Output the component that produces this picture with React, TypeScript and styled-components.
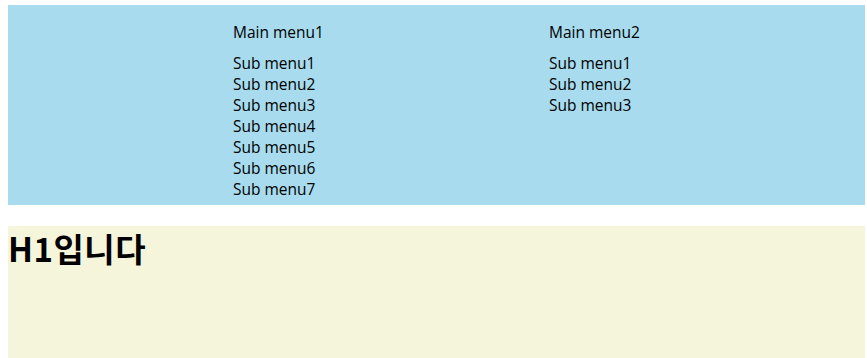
import * as React from "react";
import styled, { createGlobalStyle } from "styled-components";

const GlobalStyle = createGlobalStyle`
  html, body {
    margin: 0;
    padding: 0;
    background: #ffffff;
  }
  body {
    font-family: "Open Sans", "Noto Sans CJK KR", sans-serif;
    color: #000000;
  }
`;

const Page = styled.div`
  padding: 5px 2px 0 8px;
  display: flex;
  flex-direction: column;
  gap: 21px;
`;

const Header = styled.nav`
  background: #a7dbed;
  height: 200px;
  box-sizing: border-box;
  padding: 17px 0 0 225px;
  display: flex;
`;

const MenuColumn = styled.div`
  width: 316px;
  display: flex;
  flex-direction: column;
`;

const MainItem = styled.div`
  font-size: 15.5px;
  line-height: 21px;
  margin-bottom: 10px;
`;

const SubList = styled.ul`
  list-style: none;
  margin: 0;
  padding: 0;
`;

const SubItem = styled.li`
  font-size: 15.5px;
  line-height: 21px;
`;

const Content = styled.section`
  background: #f5f5dc;
  height: 140px;
`;

const Title = styled.h1`
  margin: 0;
  font-family: "Noto Sans CJK KR", "Open Sans", sans-serif;
  font-size: 33px;
  font-weight: 700;
  line-height: 44px;
  letter-spacing: 0.5px;
`;

const menus = [
  { title: "Main menu1", items: 7 },
  { title: "Main menu2", items: 3 },
];

export default function App() {
  return (
    <>
      <GlobalStyle />
      <Page>
        <Header>
          {menus.map((menu) => (
            <MenuColumn key={menu.title}>
              <MainItem>{menu.title}</MainItem>
              <SubList>
                {Array.from({ length: menu.items }, (_, i) => (
                  <SubItem key={i}>Sub menu{i + 1}</SubItem>
                ))}
              </SubList>
            </MenuColumn>
          ))}
        </Header>
        <Content>
          <Title>H1입니다</Title>
        </Content>
      </Page>
    </>
  );
}
